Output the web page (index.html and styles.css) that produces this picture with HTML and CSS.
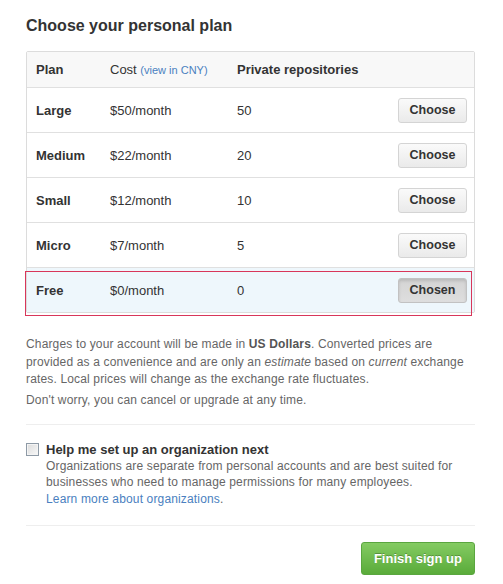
FILE: index.html
```html
<!DOCTYPE html>
<html>
<head>
<meta charset="utf-8">
<link rel="stylesheet" href="styles.css">
</head>
<body>
<div class="page">
  <h2 class="title">Choose your personal plan</h2>
  <div class="plans">
    <div class="row head">
      <div class="plan">Plan</div>
      <div class="cost">Cost <a class="cny" href="#">(view in CNY)</a></div>
      <div class="repos">Private repositories</div>
      <div></div>
    </div>
    <div class="row">
      <div class="plan">Large</div>
      <div class="cost">$50/month</div>
      <div class="repos">50</div>
      <div><button class="btn">Choose</button></div>
    </div>
    <div class="row">
      <div class="plan">Medium</div>
      <div class="cost">$22/month</div>
      <div class="repos">20</div>
      <div><button class="btn">Choose</button></div>
    </div>
    <div class="row">
      <div class="plan">Small</div>
      <div class="cost">$12/month</div>
      <div class="repos">10</div>
      <div><button class="btn">Choose</button></div>
    </div>
    <div class="row">
      <div class="plan">Micro</div>
      <div class="cost">$7/month</div>
      <div class="repos">5</div>
      <div><button class="btn">Choose</button></div>
    </div>
    <div class="row selected">
      <div class="plan">Free</div>
      <div class="cost">$0/month</div>
      <div class="repos">0</div>
      <div><button class="btn chosen">Chosen</button></div>
      <span class="highlight"></span>
    </div>
  </div>

  <p class="note">Charges to your account will be made in <strong>US Dollars</strong>. Converted prices are provided as a convenience and are only an <em>estimate</em> based on <em>current</em> exchange rates. Local prices will change as the exchange rate fluctuates.</p>
  <p class="note second">Don't worry, you can cancel or upgrade at any time.</p>

  <div class="org">
    <span class="check"></span>
    <div class="org-text">
      <div class="org-title">Help me set up an organization next</div>
      <div class="org-desc">Organizations are separate from personal accounts and are best suited for businesses who need to manage permissions for many employees.</div>
      <div class="org-desc"><a href="#" class="link">Learn more about organizations</a>.</div>
    </div>
  </div>

  <div class="actions">
    <button class="finish">Finish sign up</button>
  </div>
</div>
</body>
</html>
```

FILE: styles.css
```css
html, body {
  margin: 0;
  padding: 0;
  background: #fff;
}
body {
  font-family: "Liberation Sans", Arial, sans-serif;
  color: #333;
}
.page {
  width: 449px;
  padding: 16px 0 0 26px;
}
.title {
  margin: 0;
  font-size: 16px;
  line-height: 20px;
  font-weight: bold;
  color: #333;
}
.plans {
  position: relative;
  margin-top: 15px;
  border: 1px solid #dcdcdc;
  border-radius: 2px;
}
.row {
  position: relative;
  display: grid;
  grid-template-columns: 74px 127px 1fr auto;
  align-items: center;
  height: 44px;
  padding: 0 7px 0 9px;
  border-top: 1px solid #e0e0e0;
  font-size: 13px;
}
.row.head {
  height: 35px;
  border-top: none;
  background: #f8f8f8;
  font-weight: bold;
}
.row.head .cost {
  font-weight: normal;
}
.plan {
  font-weight: bold;
}
.cny {
  font-size: 11px;
  color: #4a7fc0;
  text-decoration: none;
}
.btn {
  width: 69px;
  height: 25px;
  padding: 0;
  font-family: "Liberation Sans", Arial, sans-serif;
  font-size: 12.5px;
  font-weight: bold;
  color: #333;
  border: 1px solid #d4d4d4;
  border-radius: 3px;
  background: linear-gradient(#fafafa, #eaeaea);
  box-shadow: 0 1px 0 rgba(255,255,255,0.6);
}
.btn.chosen {
  background: linear-gradient(#d4d4d4, #dedede);
  border-color: #c2c2c2;
  box-shadow: inset 0 2px 3px rgba(0,0,0,0.12);
}
.row.selected {
  background: #eef7fc;
}
.highlight {
  position: absolute;
  left: -2px;
  top: 3px;
  width: 445px;
  height: 43px;
  border: 1px solid #d8365a;
  pointer-events: none;
}
.note {
  margin: 23px 0 0;
  font-size: 12px;
  line-height: 17.5px;
  letter-spacing: 0.15px;
  color: #666;
}
.note strong {
  color: #555;
}
.note.second {
  margin-top: 3.5px;
}
.org {
  display: flex;
  align-items: flex-start;
  gap: 7px;
  margin-top: 14px;
  padding: 16px 0 17px;
  border-top: 1px solid #eee;
  border-bottom: 1px solid #eee;
}
.check {
  flex: none;
  width: 11px;
  height: 11px;
  margin-top: 2px;
  border: 1px solid #8e9aa6;
  background: linear-gradient(135deg, #dcdcdc, #f8f8f8);
  box-shadow: inset 0 0 0 1px #f4f4f4;
}
.org-text {
  flex: 1;
}
.org-title {
  font-size: 13px;
  line-height: 17px;
  font-weight: bold;
  color: #333;
}
.org-desc {
  font-size: 12px;
  line-height: 16.7px;
  letter-spacing: 0.15px;
  color: #666;
}
.link {
  color: #4a7fc0;
  text-decoration: none;
}
.actions {
  display: flex;
  justify-content: flex-end;
  padding-top: 16px;
}
.finish {
  height: 33px;
  padding: 0 12px;
  font-family: "Liberation Sans", Arial, sans-serif;
  font-size: 13px;
  font-weight: bold;
  color: #fff;
  text-shadow: 0 -1px 0 rgba(0,0,0,0.25);
  border: 1px solid #5aa63f;
  border-radius: 3px;
  background: linear-gradient(#84cb62, #5aab3a);
}
```
